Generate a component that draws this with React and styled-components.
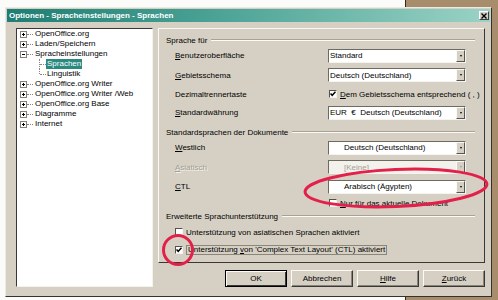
import React from "react";
import styled, { createGlobalStyle } from "styled-components";

const GlobalStyle = createGlobalStyle`
  html, body {
    margin: 0;
    padding: 0;
    background: #fff;
  }
  body {
    font-family: "Liberation Sans", Arial, sans-serif;
    font-size: 8px;
    color: #000;
  }
`;

const treeItems = [
  { label: "OpenOffice.org", expander: "+" },
  { label: "Laden/Speichern", expander: "+" },
  { label: "Spracheinstellungen", expander: "-" },
  { label: "Sprachen", child: true, selected: true },
  { label: "Linguistik", child: true, last: true },
  { label: "OpenOffice.org Writer", expander: "+" },
  { label: "OpenOffice.org Writer /Web", expander: "+" },
  { label: "OpenOffice.org Base", expander: "+" },
  { label: "Diagramme", expander: "+" },
  { label: "Internet", expander: "+" },
];

export default function App() {
  return (
    <>
      <GlobalStyle />
      <Desktop>
        <BackWindow />
        <Dialog>
          <TitleBar>
            <TitleText>Optionen - Spracheinstellungen - Sprachen</TitleText>
            <CloseButton>
              <svg width="6" height="6" viewBox="0 0 6 6">
                <path d="M0.5 0.5 L5.5 5.5 M5.5 0.5 L0.5 5.5" stroke="#000" strokeWidth="1.4" />
              </svg>
            </CloseButton>
          </TitleBar>

          <Body>
            <TreePanel>
              {treeItems.map((item) => (
                <TreeRow key={item.label}>
                  {item.child ? (
                    <>
                      <TreeIndent />
                      <Elbow $last={item.last} />
                    </>
                  ) : (
                    <>
                      <Expander $minus={item.expander === "-"} />
                      <Connector />
                    </>
                  )}
                  <TreeLabel $selected={item.selected}>{item.label}</TreeLabel>
                </TreeRow>
              ))}
            </TreePanel>

            <RightCol>
              <Panel>
                <GroupHeader $h={12}>
                  <span>Sprache für</span>
                  <Groove />
                </GroupHeader>
                <FormRow $h={19}>
                  <span><U>B</U>enutzeroberfläche</span>
                  <Select>
                    <SelectText>Standard</SelectText>
                    <Arrow />
                  </Select>
                </FormRow>
                <FormRow $h={20}>
                  <span><U>G</U>ebietsschema</span>
                  <Select>
                    <SelectText>Deutsch (Deutschland)</SelectText>
                    <Arrow />
                  </Select>
                </FormRow>
                <FormRow $h={18}>
                  <span>Dezimaltrennertaste</span>
                  <CheckLine>
                    <CheckBox checked />
                    <span><U>D</U>em Gebietsschema entsprechend ( , )</span>
                  </CheckLine>
                </FormRow>
                <FormRow $h={19}>
                  <span><U>S</U>tandardwährung</span>
                  <Select>
                    <SelectText>EUR&nbsp; €&nbsp; Deutsch (Deutschland)</SelectText>
                    <Arrow />
                  </Select>
                </FormRow>

                <GroupHeader $h={12} $top={4}>
                  <span>Standardsprachen der Dokumente</span>
                  <Groove />
                </GroupHeader>
                <FormRow $h={19}>
                  <span><U>W</U>estlich</span>
                  <Select>
                    <SelectText $indent>Deutsch (Deutschland)</SelectText>
                    <Arrow />
                  </Select>
                </FormRow>
                <FormRow $h={20}>
                  <Disabled><U>A</U>siatisch</Disabled>
                  <Select $disabled>
                    <SelectText $indent $disabled>[Keine]</SelectText>
                    <Arrow $disabled />
                  </Select>
                </FormRow>
                <FormRow $h={19}>
                  <span><U>C</U>TL</span>
                  <Select>
                    <SelectText $indent>Arabisch (Ägypten)</SelectText>
                    <Arrow />
                  </Select>
                </FormRow>
                <FormRow $h={14}>
                  <span />
                  <CheckLine>
                    <CheckBox />
                    <span><U>N</U>ur für das aktuelle Dokument</span>
                  </CheckLine>
                </FormRow>

                <GroupHeader $h={12}>
                  <span>Erweiterte Sprachunterstützung</span>
                  <Groove />
                </GroupHeader>
                <OptionRow $h={20}>
                  <CheckBox />
                  <span>Unterstützung von asiatischen Sprachen aktiviert</span>
                </OptionRow>
                <OptionRow $h={16}>
                  <CheckBox checked />
                  <FocusLabel>Unterstützung <U>v</U>on 'Complex Text Layout' (CTL) aktiviert</FocusLabel>
                </OptionRow>
              </Panel>

              <ButtonRow>
                <Button $default>OK</Button>
                <Button>Abbrechen</Button>
                <Button><U>H</U>ilfe</Button>
                <Button><U>Z</U>urück</Button>
              </ButtonRow>
            </RightCol>
          </Body>
        </Dialog>

        <Marks width="498" height="300" viewBox="0 0 498 300">
          <ellipse cx="396" cy="188" rx="91" ry="18.5" transform="rotate(-2.5 396 188)" />
          <circle cx="178" cy="250" r="14.5" />
        </Marks>
      </Desktop>
    </>
  );
}

function CheckBox({ checked }) {
  return (
    <Box>
      {checked && (
        <svg width="6" height="6" viewBox="0 0 6 6">
          <path d="M0.5 2.5 L2.2 4.3 L5.5 0.8" fill="none" stroke="#000" strokeWidth="1.5" />
        </svg>
      )}
    </Box>
  );
}

const Desktop = styled.div`
  position: relative;
  width: 498px;
  height: 300px;
  overflow: hidden;
  background: #fbfbfa;
`;

const BackWindow = styled.div`
  position: absolute;
  left: 405px;
  top: 0;
  right: 0;
  bottom: 0;
  background: #a78d6b;
  border-left: 1px solid #2a2620;
`;

const Dialog = styled.div`
  position: absolute;
  left: 5px;
  top: 7px;
  width: 487px;
  height: 290px;
  box-sizing: border-box;
  background: #d6d0c4;
  border: 1px solid;
  border-color: #eeeae2 #34322e #34322e #eeeae2;
  padding: 1px;
  display: flex;
  flex-direction: column;
`;

const TitleBar = styled.div`
  height: 13px;
  display: flex;
  align-items: center;
  justify-content: space-between;
  padding: 0 1px 0 2px;
  background: linear-gradient(to right, #1f7d73 0%, #4da497 45%, #9ad3c5 100%);
`;

const TitleText = styled.span`
  color: #fff;
  font-weight: bold;
  font-size: 8px;
  white-space: nowrap;
`;

const CloseButton = styled.div`
  width: 10px;
  height: 9px;
  box-sizing: border-box;
  background: #d6d0c4;
  border: 1px solid;
  border-color: #fff #404040 #404040 #fff;
  display: flex;
  align-items: center;
  justify-content: center;
`;

const Body = styled.div`
  flex: 1;
  display: flex;
  gap: 5px;
  padding: 6px 5px 8px 9px;
`;

const TreePanel = styled.div`
  width: 137px;
  box-sizing: border-box;
  background: #fff;
  border: 1px solid;
  border-color: #3a3834 #f4f2ee #f4f2ee #3a3834;
  padding: 0 0 0 3px;
`;

const TreeRow = styled.div`
  height: 10px;
  display: flex;
  align-items: center;
  white-space: nowrap;
`;

const Expander = styled.div`
  position: relative;
  width: 7px;
  height: 7px;
  box-sizing: border-box;
  border: 1px solid #848078;
  background: #fff;
  &::before {
    content: "";
    position: absolute;
    left: 1px;
    top: 2px;
    width: 3px;
    height: 1px;
    background: #000;
  }
  &::after {
    content: "";
    position: absolute;
    left: 2px;
    top: 1px;
    width: 1px;
    height: 3px;
    background: #000;
    display: ${(p) => (p.$minus ? "none" : "block")};
  }
`;

const Connector = styled.div`
  width: 6px;
  border-top: 1px dotted #8a867e;
  margin-right: 1px;
`;

const TreeIndent = styled.div`
  width: 19px;
  flex: none;
`;

const Elbow = styled.div`
  align-self: stretch;
  width: 7px;
  flex: none;
  position: relative;
  &::before {
    content: "";
    position: absolute;
    left: 0;
    top: 0;
    height: ${(p) => (p.$last ? "5px" : "10px")};
    border-left: 1px dotted #8a867e;
  }
  &::after {
    content: "";
    position: absolute;
    left: 1px;
    top: 5px;
    width: 6px;
    border-top: 1px dotted #8a867e;
  }
`;

const TreeLabel = styled.span`
  padding: 0 1px;
  line-height: 10px;
  background: ${(p) => (p.$selected ? "#2a8a80" : "transparent")};
  color: ${(p) => (p.$selected ? "#fff" : "#000")};
`;

const RightCol = styled.div`
  flex: 1;
  display: flex;
  flex-direction: column;
  gap: 7px;
`;

const Panel = styled.div`
  height: 235px;
  box-sizing: border-box;
  border: 1px solid;
  border-color: #faf8f4 #3a3834 #3a3834 #faf8f4;
  padding: 5px 0 0 0;
  display: flex;
  flex-direction: column;
`;

const GroupHeader = styled.div`
  height: ${(p) => p.$h}px;
  margin-top: ${(p) => p.$top || 0}px;
  display: flex;
  align-items: center;
  padding: 0 9px 0 7px;
  white-space: nowrap;
`;

const Groove = styled.div`
  flex: 1;
  margin-left: 4px;
  border-top: 1px solid #a8a294;
  border-bottom: 1px solid #fbfaf7;
`;

const FormRow = styled.div`
  height: ${(p) => p.$h}px;
  display: grid;
  grid-template-columns: 153px 138px;
  align-items: center;
  padding-left: 16px;
  white-space: nowrap;
`;

const Select = styled.div`
  height: 14px;
  box-sizing: border-box;
  display: flex;
  align-items: stretch;
  background: ${(p) => (p.$disabled ? "#f3f1ec" : "#fff")};
  border: 1px solid;
  border-color: #6e6a62 #f6f4ef #f6f4ef #6e6a62;
`;

const SelectText = styled.span`
  flex: 1;
  display: flex;
  align-items: center;
  padding-left: ${(p) => (p.$indent ? "15px" : "1px")};
  color: ${(p) => (p.$disabled ? "#a39e92" : "#000")};
`;

const Arrow = styled.div`
  width: 9px;
  box-sizing: border-box;
  background: #d6d0c4;
  border: 1px solid;
  border-color: #fbfaf7 #555 #555 #fbfaf7;
  display: flex;
  align-items: center;
  justify-content: center;
  &::after {
    content: "";
    border-left: 1.5px solid transparent;
    border-right: 1.5px solid transparent;
    border-top: 2px solid ${(p) => (p.$disabled ? "#a39e92" : "#000")};
  }
`;

const CheckLine = styled.div`
  display: flex;
  align-items: center;
  gap: 3px;
  padding-left: 1px;
`;

const OptionRow = styled.div`
  height: ${(p) => p.$h}px;
  display: flex;
  align-items: center;
  gap: 3px;
  padding-left: 16px;
  white-space: nowrap;
`;

const Box = styled.div`
  width: 8px;
  height: 8px;
  box-sizing: border-box;
  background: #fff;
  border: 1px solid;
  border-color: #55524c #f4f2ee #f4f2ee #55524c;
  display: flex;
  align-items: center;
  justify-content: center;
  flex: none;
`;

const FocusLabel = styled.span`
  border: 1px solid #8c8678;
  padding: 0 1px;
  line-height: 8px;
`;

const Disabled = styled.span`
  color: #a39e92;
  text-shadow: 1px 1px 0 #f4f2ee;
`;

const U = styled.span`
  text-decoration: underline;
`;

const ButtonRow = styled.div`
  display: flex;
  justify-content: flex-end;
  gap: 4px;
`;

const Button = styled.div`
  width: 62px;
  height: 17px;
  box-sizing: border-box;
  display: flex;
  align-items: center;
  justify-content: center;
  background: #d6d0c4;
  border: 1px solid;
  border-color: ${(p) => (p.$default ? "#000" : "#fbfaf7 #3a3834 #3a3834 #fbfaf7")};
  box-shadow: ${(p) =>
    p.$default
      ? "inset 1px 1px 0 #fbfaf7, inset -1px -1px 0 #3a3834"
      : "inset -1px -1px 0 #8a857a"};
`;

const Marks = styled.svg`
  position: absolute;
  left: 0;
  top: 0;
  pointer-events: none;
  fill: none;
  stroke: #e3204a;
  stroke-width: 3;
`;
